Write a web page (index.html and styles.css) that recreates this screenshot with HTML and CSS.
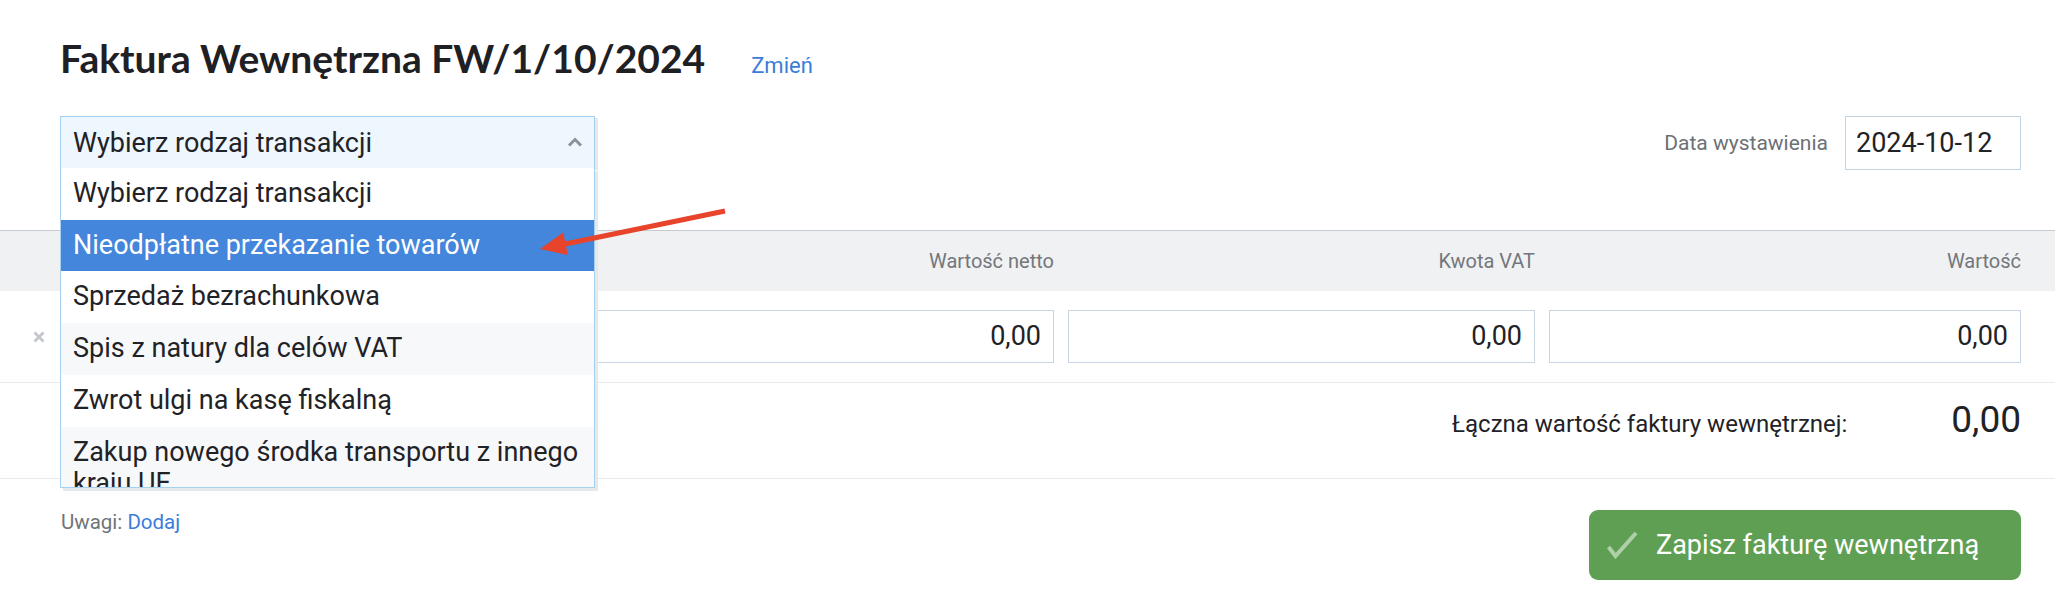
FILE: index.html
```html
<!DOCTYPE html>
<html lang="pl">
<head>
<meta charset="utf-8">
<title>Faktura Wewnętrzna FW/1/10/2024</title>
<link rel="stylesheet" href="styles.css">
</head>
<body>
<div class="page">
  <header class="head">
    <div class="title-row">
      <h1 class="title">Faktura Wewnętrzna FW/1/10/2024</h1>
      <a class="link change" href="#">Zmień</a>
    </div>

    <div class="controls">
      <div class="select open">
        <div class="select-head">
          <span>Wybierz rodzaj transakcji</span>
          <svg class="chevron" width="16" height="10" viewBox="0 0 16 10"><path d="M2 8.5 L8 2.5 L14 8.5" fill="none" stroke="#8b9299" stroke-width="3"/></svg>
        </div>
        <ul class="select-menu">
          <li class="opt">Wybierz rodzaj transakcji</li>
          <li class="opt active">Nieodpłatne przekazanie towarów</li>
          <li class="opt">Sprzedaż bezrachunkowa</li>
          <li class="opt">Spis z natury dla celów VAT</li>
          <li class="opt">Zwrot ulgi na kasę fiskalną</li>
          <li class="opt">Zakup nowego środka transportu z innego kraju UE</li>
        </ul>
      </div>

      <div class="date-group">
        <span class="date-label">Data wystawienia</span>
        <div class="date-box">2024-10-12</div>
      </div>
    </div>
  </header>

  <div class="grid band">
    <div></div>
    <div></div>
    <div class="th">Wartość netto</div>
    <div class="th">Kwota VAT</div>
    <div class="th">Wartość</div>
  </div>

  <div class="grid item-row">
    <div class="remove">
      <svg width="12" height="12" viewBox="0 0 12 12"><path d="M1.5 1.5 L10.5 10.5 M10.5 1.5 L1.5 10.5" stroke="#c3c6ca" stroke-width="2.8"/></svg>
    </div>
    <div></div>
    <div class="field">0,00</div>
    <div class="field">0,00</div>
    <div class="field">0,00</div>
  </div>

  <div class="total-row">
    <span class="total-label">Łączna wartość faktury wewnętrznej:</span>
    <span class="total-value">0,00</span>
  </div>

  <footer class="foot">
    <div class="notes">Uwagi: <a class="link" href="#">Dodaj</a></div>
    <button class="save" type="button">
      <svg class="check" width="32" height="28" viewBox="0 0 32 28"><path d="M2.5 16 L9.5 25 L30 2" fill="none" stroke="rgba(255,255,255,0.5)" stroke-width="4"/></svg>
      <span>Zapisz fakturę wewnętrzną</span>
    </button>
  </footer>

  <svg class="pointer" width="200" height="64" viewBox="0 0 200 64">
    <path d="M195 11 L34 44.3" stroke="#e8432b" stroke-width="5"/>
    <path d="M10 49 L33.2 32.5 L37.8 55.1 Z" fill="#e8432b"/>
  </svg>
</div>
</body>
</html>
```

FILE: styles.css
```css
* { box-sizing: border-box; }

html, body {
  margin: 0;
  background: #fff;
}

body {
  font-family: Roboto, "Liberation Sans", Arial, sans-serif;
  color: #1f2226;
}

.page {
  position: relative;
  width: 2055px;
  height: 601px;
  overflow: hidden;
}

.link {
  color: #3b7ddb;
  text-decoration: none;
}

/* heading */
.head {
  padding: 34px 34px 0 60px;
}

.title-row {
  display: flex;
  align-items: baseline;
  height: 48px;
}

.title {
  margin: 0;
  font-family: Lato, "Open Sans", sans-serif;
  font-weight: 700;
  font-size: 39px;
  line-height: 48px;
  color: #1e2024;
}

.change {
  margin-left: 46px;
  font-size: 22px;
}

/* transaction type + issue date */
.controls {
  margin-top: 34px;
  display: flex;
  justify-content: space-between;
  align-items: flex-start;
  height: 54px;
}

.select {
  position: relative;
  width: 535px;
  z-index: 5;
}

.select-head {
  height: 52px;
  display: flex;
  align-items: center;
  justify-content: space-between;
  padding: 0 11px 0 12px;
  background: #eef6fe;
  border: 1px solid #a6d0f0;
  border-bottom: 0;
  font-size: 27px;
  box-shadow: 3px 2px 0 #e6e9ec;
}

.chevron {
  margin-top: -2px;
}

.select-menu {
  position: absolute;
  top: 52px;
  left: 0;
  right: 0;
  margin: 0;
  padding: 0;
  list-style: none;
  max-height: 320px;
  overflow: hidden;
  background: #fff;
  border: 1px solid #a6d0f0;
  border-top: 0;
  box-shadow: 3px 3px 0 #e6e9ec;
}

.opt {
  padding: 10px 8px 10px 12px;
  font-size: 27px;
  line-height: 31.7px;
  background: #fff;
}

.opt:nth-child(even) {
  background: #f7f8fa;
}

.opt.active {
  background: #4386dc;
  color: #fff;
}

.date-group {
  display: flex;
  align-items: center;
  gap: 17px;
}

.date-label {
  font-size: 21px;
  color: #6d7176;
}

.date-box {
  width: 176px;
  height: 54px;
  border: 1px solid #c4d4e3;
  padding: 0 10px;
  font-size: 27px;
  line-height: 52px;
  color: #1f2226;
}

/* items table */
.grid {
  display: grid;
  grid-template-columns: 60px 1fr 468px 467px 472px;
  column-gap: 14px;
  padding-right: 34px;
}

.band {
  margin-top: 60px;
  height: 61px;
  border-top: 1px solid #c6cbd1;
  background: #f0f1f3;
}

.th {
  text-align: right;
  font-size: 20px;
  line-height: 60px;
  color: #73777c;
}

.item-row {
  padding-top: 19px;
  padding-bottom: 19px;
  border-bottom: 1px solid #e7e9ec;
  align-items: center;
}

.remove {
  display: flex;
  align-items: center;
  padding-left: 33px;
}

.remove svg {
  display: block;
}

.field {
  height: 53px;
  border: 1px solid #c8d6e3;
  padding: 0 12px;
  text-align: right;
  font-size: 27px;
  line-height: 51px;
}

/* invoice total */
.total-row {
  display: flex;
  justify-content: flex-end;
  align-items: baseline;
  gap: 104px;
  padding: 16px 34px 37px 60px;
  border-bottom: 1px solid #e7e9ec;
}

.total-label {
  font-size: 24px;
}

.total-value {
  font-size: 37px;
  line-height: 42px;
}

/* notes + save */
.foot {
  display: flex;
  justify-content: space-between;
  align-items: flex-start;
  padding: 31px 34px 0 61px;
}

.notes {
  font-size: 20.5px;
  line-height: 24px;
  color: #6f7479;
}

.save {
  display: flex;
  align-items: center;
  gap: 18px;
  width: 432px;
  height: 70px;
  padding: 0 0 0 17px;
  border: 0;
  border-radius: 9px;
  background: #5f9f53;
  color: #fff;
  font-family: Roboto, "Liberation Sans", Arial, sans-serif;
  font-size: 27px;
  cursor: pointer;
}

.check {
  display: block;
}

/* annotation arrow over the menu */
.pointer {
  position: absolute;
  left: 530px;
  top: 200px;
  z-index: 10;
}
```
